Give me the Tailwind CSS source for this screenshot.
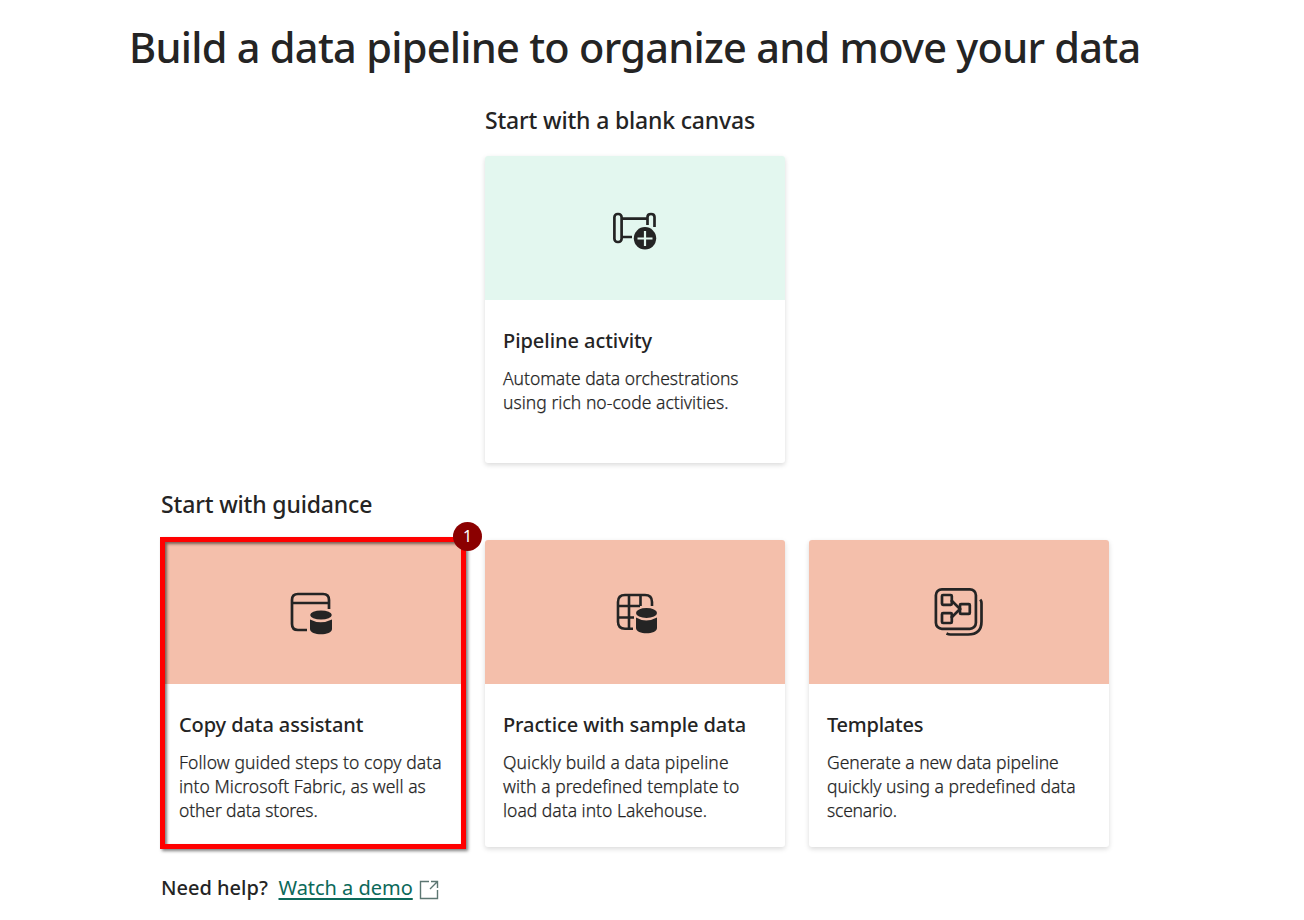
<!DOCTYPE html>
<html lang="en"><head><meta charset="utf-8"><title>Data pipeline</title>
<script src="https://cdn.jsdelivr.net/npm/@tailwindcss/browser@4"></script></head>
<body class="w-[1304px] h-[920px] overflow-hidden bg-white text-[#242424] font-['Noto_Sans','Open_Sans',sans-serif]">
<main class="flex flex-col pl-[161px]">
<h1 class="-ml-[32px] mt-[17px] h-[60px] leading-[60px] text-[41.5px] tracking-[-0.72px] font-medium whitespace-nowrap">Build a data pipeline to organize and move your data</h1>
<section class="ml-[324px] w-[300px] mt-[27px]">
<h2 class="h-8 leading-8 text-[23px] tracking-[-0.18px] font-medium whitespace-nowrap">Start with a blank canvas</h2>
<article class="mt-5 h-[307px] rounded-[3px] overflow-hidden shadow-[0_2px_5px_rgba(0,0,0,0.15)]">
<div class="h-36 bg-[#e3f7ef] flex items-center justify-center">
<svg class="w-[70px] h-[60px] mt-1" viewBox="0 0 70 60" fill="none" stroke="#242424" stroke-width="2.7"><path d="M22 18.6h25M22 37h10"/><rect x="14.4" y="14" width="7.2" height="28" rx="3.2"/><path d="M47.5 25v-8q0-3 3.5-3t3.5 3v10"/><circle cx="45" cy="38.3" r="11.2" fill="#242424" stroke="none"/><path d="M45 31v15M37.5 38.5h15" stroke="#e3f7ef" stroke-width="2.2"/></svg></div>
<div class="px-[18px] pt-[25px]"><h3 class="h-8 leading-8 text-[20px] tracking-[-0.05px] font-medium whitespace-nowrap">Pipeline activity</h3>
<p class="mt-[9px] text-[17.5px] font-light [-webkit-text-stroke:0.25px_#242424] leading-6 whitespace-nowrap"><span class="tracking-[-0.04px]">Automate data orchestrations</span><br><span class="tracking-[0.04px]">using rich no-code activities.</span></p></div>
</article></section>
<h2 class="mt-[25px] h-8 leading-8 text-[23px] tracking-[-0.16px] font-medium whitespace-nowrap">Start with guidance</h2>
<section class="mt-[20px] flex gap-6">
<article class="relative w-[300px] h-[307px]">
<div class="h-36 bg-[#f4bfab] flex items-center justify-center"><svg class="w-[65px] h-[65px] ml-px" viewBox="0 0 65 65" fill="none" stroke="#242424" stroke-width="2.7"><path d="M28 50H19q-6 0-6-6V20q0-6 6-6h25q6 0 6 6v9M13 23h37"/><path d="M31 39.5q10.5 5.5 22 0V49c0 7-22 7-22 0z" fill="#242424" stroke="none"/><ellipse cx="42" cy="35" rx="10.8" ry="4.5" fill="#242424" stroke="none"/></svg></div>
<div class="px-[18px] pt-[25px]"><h3 class="h-8 leading-8 text-[20px] tracking-[-0.1px] font-medium whitespace-nowrap">Copy data assistant</h3>
<p class="mt-[9px] text-[17.5px] font-light [-webkit-text-stroke:0.25px_#242424] leading-6 whitespace-nowrap"><span class="tracking-[0.1px]">Follow guided steps to copy data</span><br><span class="tracking-[0.03px]">into Microsoft Fabric, as well as</span><br><span class="tracking-[-0.12px]">other data stores.</span></p></div>
<div class="absolute -left-px -top-[3px] w-[306px] h-[312px] border-[5px] border-[#f00] shadow-[2px_2px_3px_rgba(0,0,0,0.5),inset_2px_2px_3px_rgba(0,0,0,0.5)]"></div>
<div class="absolute left-[292px] -top-[18px] w-[29px] h-[29px] rounded-full bg-[#8b0000] text-white text-[16px] leading-[29px] text-center">1</div>
</article>
<article class="w-[300px] h-[307px] rounded-[3px] overflow-hidden shadow-[0_2px_5px_rgba(0,0,0,0.15)]">
<div class="h-36 bg-[#f4bfab] flex items-center justify-center"><svg class="w-[65px] h-[65px] ml-1" viewBox="0 0 65 65" fill="none" stroke="#242424" stroke-width="2.6"><path d="M28 48.7H20q-7 0-7-7V22q0-7 7-7h20q7 0 7 7v4M13 26h22M13 37.5h16M24 15v33.5M35.5 15v11"/><path d="M31 37.5q10 6 21 0V48c0 7-21 7-21 0z" fill="#242424" stroke="none"/><ellipse cx="41.5" cy="33" rx="10.5" ry="5" fill="#242424" stroke="none"/></svg></div>
<div class="px-[18px] pt-[25px]"><h3 class="h-8 leading-8 text-[20px] tracking-[-0.1px] font-medium whitespace-nowrap">Practice with sample data</h3>
<p class="mt-[9px] text-[17.5px] font-light [-webkit-text-stroke:0.25px_#242424] leading-6 whitespace-nowrap"><span class="tracking-[0.11px]">Quickly build a data pipeline</span><br><span class="tracking-[0.05px]">with a predefined template to</span><br><span>load data into Lakehouse.</span></p></div>
</article>
<article class="w-[300px] h-[307px] rounded-[3px] overflow-hidden shadow-[0_2px_5px_rgba(0,0,0,0.15)]">
<div class="h-36 bg-[#f4bfab] flex items-center justify-center"><svg class="w-[70px] h-[65px] ml-[2px]" viewBox="0 0 70 65" fill="none" stroke="#242424" stroke-width="2.7"><rect x="10.9" y="9.3" width="40" height="39.5" rx="6"/><path d="M21.5 53.5q2 1 4 1h17.5q13.5 0 13.5-13V23q0-2-1.2-3.5M26 20l9 9-9 9"/><g><rect x="17" y="15" width="9.8" height="9.8" rx="1"/><rect x="17" y="33.2" width="9.8" height="9.8" rx="1"/><rect x="35" y="24.1" width="9.8" height="9.8" rx="1"/></g></svg></div>
<div class="px-[18px] pt-[25px]"><h3 class="h-8 leading-8 text-[20px] tracking-[-0.25px] font-medium whitespace-nowrap">Templates</h3>
<p class="mt-[9px] text-[17.5px] font-light [-webkit-text-stroke:0.25px_#242424] leading-6 whitespace-nowrap"><span class="tracking-[-0.02px]">Generate a new data pipeline</span><br><span class="tracking-[0.04px]">quickly using a predefined data</span><br><span class="tracking-[-0.2px]">scenario.</span></p></div>
</article></section>
<footer class="mt-[25px] h-8 flex items-center text-[20px] leading-8 whitespace-nowrap"><span class="w-[107px] font-medium">Need help?</span><a class="ml-[10.5px] w-[134px] text-[#0c695a] underline underline-offset-[3px] decoration-[1.5px] tracking-[-0.03px]">Watch a demo</a><svg class="ml-[6.5px] mt-1 w-5 h-5" viewBox="0 0 20 20" fill="none" stroke="#5c7672" stroke-width="1.4"><path d="M10 1.5H1.5v17h17V10M12 1.5h6.5V8M18.5 1.5 11 9"/></svg></footer>
</main>
</body></html>
